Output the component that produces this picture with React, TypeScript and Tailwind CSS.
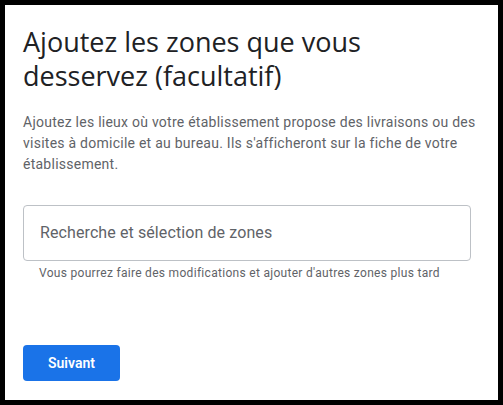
export default function App() {
  return (
    <div className="w-[503px] h-[405px] bg-black p-[5px]" style={{ fontFamily: "Roboto, 'Liberation Sans', sans-serif" }}>
      <div className="h-full bg-white pl-[18px] pr-[18px] pt-[20px]">
        <h1 className="font-['Open_Sans',sans-serif] text-[27px] leading-[34px] text-[#202124] font-normal">
          Ajoutez les zones que vous desservez (facultatif)
        </h1>
        <p className="mt-[19px] text-[14px] leading-[21px] tracking-[0.25px] text-[#5f6368]">
          Ajoutez les lieux où votre établissement propose des livraisons ou des visites à domicile et au bureau. Ils s'afficheront sur la fiche de votre établissement.
        </p>
        <div className="mt-[30px] h-[56px] w-[448px] rounded border border-[#bdc1c6] flex items-center px-4">
          <span className="text-[16px] tracking-[0.1px] text-[#5f6368]">Recherche et sélection de zones</span>
        </div>
        <div className="mt-[4px] pl-4 text-[12px] leading-[16px] tracking-[0.3px] text-[#5f6368]">
          Vous pourrez faire des modifications et ajouter d'autres zones plus tard
        </div>
        <button className="mt-[64px] h-[36px] w-[97px] rounded bg-[#1a73e8] text-white text-[14px] font-semibold">
          Suivant
        </button>
      </div>
    </div>
  );
}
